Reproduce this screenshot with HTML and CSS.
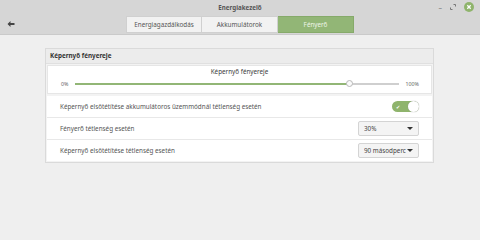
FILE: index.html
```html
<!DOCTYPE html>
<html>
<head>
<meta charset="utf-8">
<title>Energiakezelő</title>
<link rel="stylesheet" href="styles.css">
</head>
<body>
<div class="header">
  <div class="titlebar">
    <span class="title">Energiakezelő</span>
    <div class="controls">
      <span class="ctl min">&#8211;</span>
      <svg class="ctl" width="8" height="8" viewBox="0 0 8 8"><path d="M4.5 1.5h2v2M3.5 6.5h-2v-2" fill="none" stroke="#777" stroke-width="1"/></svg>
      <svg class="close" width="10" height="10" viewBox="0 0 10 10"><circle cx="5" cy="5" r="5" fill="#8fb46c"/><path d="M3.3 3.3l3.4 3.4M6.7 3.3l-3.4 3.4" stroke="#fff" stroke-width="1.3"/></svg>
    </div>
  </div>
  <div class="toolbar">
    <svg class="back" width="8" height="8" viewBox="0 0 8 8"><path d="M0.5 4l3-3v2h4v2h-4v2z" fill="#444"/></svg>
    <div class="tabs">
      <span class="tab">Energiagazdálkodás</span>
      <span class="tab">Akkumulátorok</span>
      <span class="tab active">Fényerő</span>
    </div>
  </div>
</div>
<div class="content">
  <div class="card">
    <div class="card-title">Képernyő fényereje</div>
    <div class="slider-box">
      <div class="slider-label">Képernyő fényereje</div>
      <div class="slider-row">
        <span class="pct">0%</span>
        <div class="track">
          <div class="fill" style="width:85%"></div>
          <span class="knob" style="left:85%"></span>
        </div>
        <span class="pct">100%</span>
      </div>
    </div>
    <div class="rows">
      <div class="row">
        <span>Képernyő elsötétítése akkumulátoros üzemmódnál tétlenség esetén</span>
        <span class="switch"><span class="check">&#10004;</span><span class="knob2"></span></span>
      </div>
      <div class="row">
        <span>Fényerő tétlenség esetén</span>
        <span class="combo"><span class="val">30%</span><span class="arrow"></span></span>
      </div>
      <div class="row">
        <span>Képernyő elsötétítése tétlenség esetén</span>
        <span class="combo"><span class="val">90 másodperc</span><span class="arrow"></span></span>
      </div>
    </div>
  </div>
</div>
</body>
</html>
```

FILE: styles.css
```css
body {
  margin: 0;
  width: 480px;
  height: 240px;
  background: #efefef;
  font-family: "Noto Sans", "Open Sans", sans-serif;
  font-size: 6.3px;
  color: #3c3c3c;
  overflow: hidden;
}
.header {
  height: 35px;
  background: #d6d6d6;
  border-bottom: 1px solid #cacaca;
  box-sizing: border-box;
}
.titlebar {
  height: 14px;
  display: flex;
  align-items: center;
  justify-content: center;
  position: relative;
}
.title {
  font-weight: bold;
  color: #555;
  font-size: 6.2px;
}
.controls {
  position: absolute;
  right: 6px;
  top: 2px;
  display: flex;
  align-items: center;
  gap: 7px;
}
.ctl.min {
  color: #777;
  font-size: 7px;
}
.toolbar {
  display: flex;
  align-items: center;
  height: 19px;
  position: relative;
}
.back {
  position: absolute;
  left: 7px;
  top: 6px;
}
.tabs {
  display: flex;
  margin-left: 126px;
  margin-top: 1px;
}
.tab {
  width: 76px;
  height: 17px;
  display: flex;
  align-items: center;
  justify-content: center;
  background: #f2f2f2;
  border: 1px solid #d0d0d0;
  box-sizing: border-box;
  color: #555;
}
.tab + .tab { border-left: none; }
.tab.active {
  background: #92b676;
  border-color: #86aa6a;
  color: #eef5e8;
}
.content {
  padding: 13px 46px 0 45px;
}
.card {
  border: 1px solid #dadada;
  background: #f3f3f3;
}
.card-title {
  height: 14px;
  line-height: 14px;
  padding-left: 4px;
  font-weight: bold;
  color: #333;
  background: #ececec;
  border-bottom: 1px solid #e0e0e0;
}
.slider-box {
  background: #fff;
  margin: 1px 1px 2px 1px;
  height: 27px;
  border: 1px solid #e6e6e6;
}
.slider-label {
  text-align: center;
  padding-top: 1px;
  height: 11px;
}
.slider-row {
  display: flex;
  align-items: center;
  padding: 0 12px 0 13px;
  gap: 7px;
  height: 12px;
}
.pct {
  font-size: 5.3px;
  color: #666;
}
.track {
  flex: 1;
  height: 2px;
  background: #cfcfcf;
  position: relative;
}
.fill {
  height: 2px;
  background: #92b676;
}
.knob {
  position: absolute;
  top: -3px;
  margin-left: -4px;
  width: 7px;
  height: 7px;
  border-radius: 50%;
  background: #fafafa;
  border: 1px solid #b8b8b8;
  box-sizing: border-box;
}
.rows {
  background: #fff;
  margin: 0 1px 1px 1px;
}
.row {
  display: flex;
  align-items: center;
  justify-content: space-between;
  height: 21px;
  padding: 0 13px 0 13px;
  border-bottom: 1px solid #e8e8e8;
  color: #555;
}
.row:last-child { border-bottom: none; }
.switch {
  width: 27px;
  height: 11px;
  border-radius: 6px;
  background: #8fb46c;
  position: relative;
  display: flex;
  align-items: center;
  padding-left: 4px;
  box-sizing: border-box;
}
.check {
  color: #fff;
  font-size: 5px;
}
.knob2 {
  position: absolute;
  right: 0;
  top: 0;
  width: 11px;
  height: 11px;
  border-radius: 50%;
  background: #fff;
  box-shadow: 0 0 1px #888;
}
.combo {
  width: 61px;
  height: 15px;
  background: #f4f4f4;
  border: 1px solid #d4d4d4;
  border-radius: 2px;
  box-sizing: border-box;
  display: flex;
  align-items: center;
  padding: 0 5px 0 5px;
  justify-content: space-between;
  color: #444;
}
.val {
  white-space: nowrap;
  overflow: hidden;
  width: 43px;
}
.arrow {
  width: 0;
  height: 0;
  border-left: 3px solid transparent;
  border-right: 3px solid transparent;
  border-top: 3px solid #333;
}
```
